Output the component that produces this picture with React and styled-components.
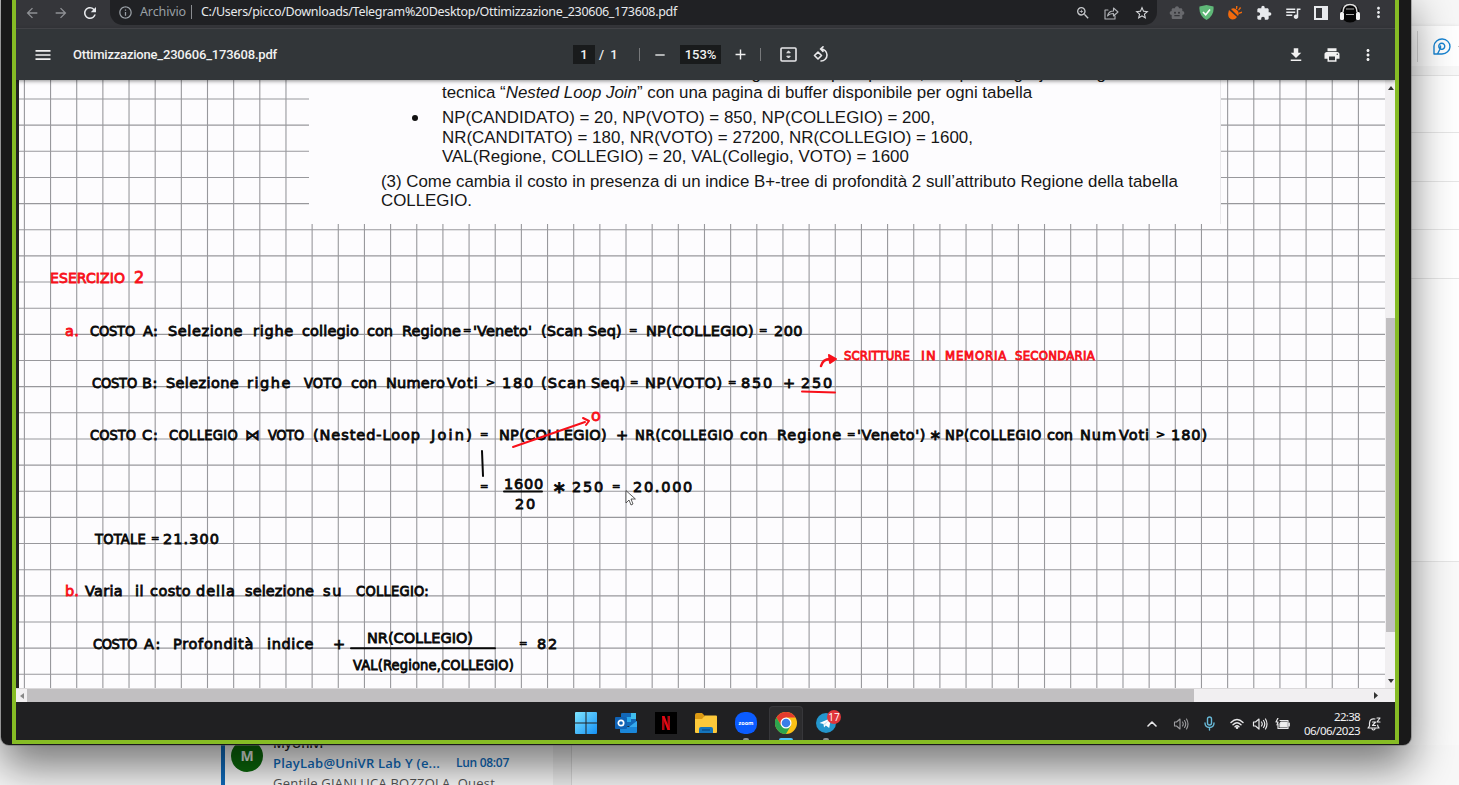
import React, { useLayoutEffect, useRef, useState } from "react";
import styled, { createGlobalStyle } from "styled-components";
import {
  MdArrowBack, MdArrowForward, MdRefresh, MdInfoOutline, MdZoomIn, MdStarOutline, MdExtension,
  MdQueueMusic, MdMoreVert, MdMenu, MdRemove, MdAdd, MdDownload, MdPrint, MdSmartToy,
} from "react-icons/md";

const Global = createGlobalStyle`
  * { box-sizing: border-box; }
  body { margin: 0; overflow: hidden; background: #fff; }
  svg { display: block; flex: none; }
`;

const ui = `"Open Sans", "Noto Sans", sans-serif`;

/* ---------- text set to an exact width ---------- */
const FitBox = styled.span`
  display: block;
  flex: none;
  width: ${(p) => p.$w}px;
  margin-left: ${(p) => p.$gap || 0}px;
  white-space: pre;
`;

function Fit({ w, gap, children, ...rest }) {
  const ref = useRef(null);
  const [spacing, setSpacing] = useState(0.01);
  useLayoutEffect(() => {
    const el = ref.current;
    const n = el.textContent.length;
    setSpacing((s) => s + (w - el.getBoundingClientRect().width) / n);
  }, [w]);
  return (
    <FitBox {...rest} $w={w} $gap={gap}>
      <span ref={ref} style={{ letterSpacing: spacing }}>{children}</span>
    </FitBox>
  );
}

/* ---------- mail application behind the window ---------- */
const Desktop = styled.div`
  position: relative;
  width: 1459px;
  height: 785px;
  overflow: hidden;
  background: #fafafa;
`;
const MailSide = styled.div`
  margin-left: 1400px;
  height: 745px;
  display: flex;
  flex-direction: column;
`;
const MailTop = styled.div`
  height: 26px;
  background: #f7f7f7;
`;
const MailCommands = styled.div`
  height: 40px;
  background: #fff;
  box-shadow: 0 2px 5px rgba(0, 0, 0, 0.22);
  display: flex;
  align-items: center;
  padding-left: 17px;
  gap: 14px;
  flex: none;
`;
const Rule = styled.div`
  width: 1px;
  height: 31px;
  background: #d8d8d8;
`;
const MoreDash = styled.div`
  width: 2px;
  height: 1px;
  margin-left: -7px;
  background: #c4c4c4;
`;
const MailRow = styled.div`
  height: ${(p) => p.$h}px;
  flex: none;
  border-bottom: 1px solid #e6e6e6;
  background: ${(p) => p.$bg || "#fff"};
`;
const MailBottom = styled.div`
  height: 40px;
  display: flex;
  padding-left: 221px;
  background: #f8f8f8;
`;
const MailItem = styled.div`
  width: 332px;
  height: 40px;
  border-left: 4px solid #0f6cbd;
  background: #fdfdfd;
  display: flex;
  padding-left: 6px;
  gap: 10px;
  overflow: hidden;
`;
const MailGutter = styled.div`
  width: 19px;
  background: #f1f1f1;
  border-right: 1px solid #dcdcdc;
`;
const Avatar = styled.div`
  width: 32px;
  height: 32px;
  border-radius: 50%;
  margin-top: -5px;
  background: #0b6a0b;
  color: #e9efe9;
  font: 700 14px/32px ${ui};
  text-align: center;
  flex: none;
`;
const MailText = styled.div`
  margin-top: -12px;
  font: 400 13px/20px ${ui};
  color: #555;
`;
const Sender = styled.div`
  color: #222;
  height: 20px;
  font-weight: 600;
`;
const Subject = styled.div`
  display: flex;
  height: 20px;
  color: #0f6cbd;
  font-weight: 600;
`;
const Small = styled(Fit)`font-size: 12px;`;

/* ---------- shared window ---------- */
const Frame = styled.div`
  position: absolute;
  left: 1px;
  top: -12px;
  width: 1410px;
  height: 757px;
  border: solid #191919;
  border-width: 12px 12px 1px 11px;
  border-radius: 0 0 8px 8px;
  background: #191919;
  box-shadow: 0 0 0 1px rgba(100, 100, 100, 0.45), 0 22px 44px rgba(0, 0, 0, 0.52);
`;
const Share = styled.div`
  height: 744px;
  border: solid #86bc25;
  border-width: 0 4px 4px 4px;
  display: flex;
  flex-direction: column;
  overflow: hidden;
`;

/* ---------- browser bar ---------- */
const BrowserBar = styled.div`
  height: 29px;
  flex: none;
  background: #35363a;
  border-bottom: 1px solid #4a4b50;
  display: flex;
  align-items: flex-start;
  color: #e8eaed;
  font: 400 12.5px/24px "Noto Sans", sans-serif;
`;
const Slot = styled.div`
  width: ${(p) => p.$w}px;
  height: ${(p) => p.$h || 25}px;
  flex: none;
  display: flex;
  align-items: center;
  justify-content: center;
  color: ${(p) => p.$c || "inherit"};
`;
const Address = styled.div`
  width: 1047px;
  height: 25px;
  background: #202124;
  border-radius: 0 0 13px 13px;
  display: flex;
  color: #e8eaed;
  margin-right: 6px;
`;
const Scheme = styled(Fit)`color: #9aa0a6;`;
const Bar = styled.div`
  width: 1px;
  height: 14px;
  margin: 5px 9px 0 5px;
  background: #8a8c90;
`;
const Grow = styled.div`flex: 1;`;

/* ---------- PDF toolbar ---------- */
const PdfBar = styled.div`
  height: 51px;
  flex: none;
  background: #323639;
  display: flex;
  align-items: center;
  color: #f1f1f1;
  font: 500 13px/19px Roboto, sans-serif;
  position: relative;
  z-index: 2;
  box-shadow: 0 1px 4px rgba(0, 0, 0, 0.45);
`;
const Field = styled.div`
  width: ${(p) => p.$w}px;
  height: 19px;
  background: #191b1c;
  text-align: center;
`;
const Tick = styled.div`
  width: 1px;
  height: 13px;
  background: #77797b;
`;
const Total = styled.div`
  width: 44px;
  padding-left: 4px;
  word-spacing: 3px;
`;

/* ---------- document ---------- */
const Viewer = styled.div`
  height: 608px;
  flex: none;
  display: flex;
  background: #222;
  padding-left: 3px;
`;
const Paper = styled.div`
  position: relative;
  width: 1366px;
  height: 608px;
  background: #fdfcfe;
  overflow: hidden;
`;
const Overlay = styled.svg`
  position: absolute;
  left: 0;
  top: 0;
`;
const Brief = styled.div`
  position: relative;
  margin-left: 290px;
  width: 912px;
  height: 144px;
  background: #fdfcfe;
  border-right: 1px solid #e8e7ea;
  padding-left: 72px;
  color: #161616;
  font: 400 16.9px/19px "Liberation Sans", sans-serif;
  overflow: hidden;
`;
const BriefLine = styled.div`
  display: flex;
  height: 19px;
  margin-top: ${(p) => p.$mt || 0}px;
  padding-left: ${(p) => p.$in || 0}px;
`;
const Bullet = styled.div`
  width: 6px;
  height: 6px;
  border-radius: 50%;
  background: #111;
  margin: 7px 24px 0 31px;
`;
const Notes = styled.div`
  position: relative;
  height: 464px;
`;
const NoteRow = styled.div`
  height: ${(p) => p.$h}px;
  display: flex;
  align-items: flex-end;
`;
const Ink = styled(Fit)`
  font: 400 14.5px/20px "DejaVu Sans", sans-serif;
  font-family: ${(p) => (p.$narrow ? `"DejaVu Sans Condensed", ` : "")}"DejaVu Sans", sans-serif;
  font-stretch: ${(p) => (p.$narrow ? "condensed" : "normal")};
  font-size: ${(p) => p.$size || 14.5}px;
  height: 20px;
  color: ${(p) => (p.$red ? "#f8101a" : "#080808")};
  -webkit-text-stroke: 0.8px currentColor;
`;

/* words written in tight capitals */
const tight = /^(COSTO|COLLEGIO:?|VOTO|TOTALE|VAL.*|SCRITTURE|MEMORIA|SECONDARIA|NP\(COLLEGIO|NR\(COLLEGIO)$/;

/* [text, start, end, red?, size?] per word; y is the writing line */
const notes = [
  { y: 283, words: [["ESERCIZIO", 50, 125, 1, 14], ["2", 134, 145, 1, 16]] },
  { y: 336, words: [["a.", 65, 79, 1], ["COSTO", 90, 135], ["A:", 143, 158], ["Selezione", 168, 243], ["righe", 253, 294], ["collegio", 302, 359], ["con", 367, 393], ["Regione", 402, 461], ["=", 463, 471, 0, 10], ["'Veneto'", 473, 532], ["(Scan", 541, 583], ["Seq)", 588, 622], ["=", 629, 637, 0, 10], ["NP(COLLEGIO)", 646, 754], ["=", 759, 767, 0, 10], ["200", 774, 803]] },
  { y: 361, words: [["SCRITTURE", 844, 910, 1, 13], ["IN", 921, 937, 1, 13], ["MEMORIA", 945, 1007, 1, 13], ["SECONDARIA", 1015, 1095, 1, 13]] },
  { y: 388, words: [["COSTO", 92, 137], ["B:", 142, 158], ["Selezione", 166, 239], ["righe", 247, 292], ["VOTO", 304, 342], ["con", 351, 377], ["Numero", 386, 445], ["Voti", 447, 479], [">", 486, 494, 0, 11], ["180", 502, 535], ["(Scan", 541, 587], ["Seq)", 591, 626], ["=", 630, 638, 0, 10], ["NP(VOTO)", 645, 723], ["=", 728, 736, 0, 10], ["850", 741, 774], ["+", 783, 796], ["250", 801, 834]] },
  { y: 421, words: [["o", 591, 603, 1, 16]] },
  { y: 440, words: [["COSTO", 90, 136], ["C:", 142, 159], ["COLLEGIO", 169, 238], ["⋈", 245, 261], ["VOTO", 268, 304], ["(Nested-Loop", 313, 421], ["Join)", 431, 474], ["=", 480, 488, 0, 10], ["NP(COLLEGIO)", 499, 607], ["+", 616, 628], ["NR(COLLEGIO", 635, 734], ["con", 740, 768], ["Regione", 777, 842], ["=", 847, 855, 0, 10], ["'Veneto')", 857, 926], ["∗", 929, 941], ["NP(COLLEGIO", 945, 1042], ["con", 1047, 1073], ["Num", 1080, 1117], ["Voti", 1119, 1150], [">", 1156, 1165, 0, 11], ["180)", 1171, 1208]] },
  { y: 489, words: [["1600", 504, 544]] },
  { y: 492, words: [["=", 480, 488, 0, 10], ["∗", 552, 566, 0, 17], ["250", 572, 605], ["=", 612, 621, 0, 10], ["20.000", 633, 694]] },
  { y: 509, words: [["20", 515, 537]] },
  { y: 544, words: [["TOTALE", 95, 146], ["=", 151, 159, 0, 10], ["21.300", 163, 220]] },
  { y: 596, words: [["b.", 65, 79, 1], ["Varia", 85, 123], ["il", 135, 144], ["costo", 150, 191], ["della", 196, 236], ["selezione", 245, 314], ["su", 323, 343], ["COLLEGIO:", 356, 429]] },
  { y: 643, words: [["NR(COLLEGIO)", 367, 473]] },
  { y: 649, words: [["COSTO", 93, 137], ["A:", 144, 162], ["Profondità", 173, 254], ["indice", 267, 314], ["+", 333, 345], ["=", 519, 527, 0, 10], ["82", 537, 559]] },
  { y: 670, words: [["VAL(Regione,COLLEGIO)", 353, 514]] },
];

function Handwriting() {
  let prevY = 219;
  return (
    <Notes>
      {notes.map((row) => {
        const h = row.y - prevY;
        prevY = row.y;
        let x = 19;
        return (
          <NoteRow key={row.y} $h={h}>
            {row.words.map(([text, from, to, red, size]) => {
              const gap = from - x;
              x = to;
              return <Ink key={from} w={to - from} gap={gap} $red={red} $size={size} $narrow={tight.test(text)}>{text}</Ink>;
            })}
          </NoteRow>
        );
      })}
    </Notes>
  );
}

function SquaredPaper() {
  const cols = Array.from({ length: 52 }, (_, i) => 5.4 + i * 26.157);
  const rows = Array.from({ length: 23 }, (_, i) => 19 + i * 26.15);
  return (
    <Overlay width="1366" height="608" stroke="#98989c" strokeWidth="1.1">
      {cols.map((x) => <line key={x} x1={x} x2={x} y1="0" y2="608" />)}
      {rows.map((y) => <line key={y} y1={y} y2={y} x1="0" x2="1366" />)}
    </Overlay>
  );
}

function Strokes() {
  return (
    <Overlay width="1366" height="608" viewBox="19 80 1366 608" fill="none" strokeLinecap="round" strokeLinejoin="round">
      <g stroke="#f8101a" strokeWidth="2">
        <path d="M802 391.5L835 392.5" />
        <path d="M821 366Q823 358 832 359" strokeWidth="2.5" />
        <path d="M829 355L836 359L830 363Z" fill="#f8101a" />
        <path d="M513 447L585 422M583 418L589 421L586 425" />
      </g>
      <g stroke="#080808" strokeWidth="2">
        <path d="M482 451L483 476" />
        <path d="M504 491.5H542" />
        <path d="M351 648.3H495" />
      </g>
      <path d="M626 491v12l3-3 2 5 2-1-2-5h4z" fill="#fff" stroke="#333" strokeWidth=".8" />
    </Overlay>
  );
}

const VScroll = styled.div`
  width: 10px;
  height: 608px;
  background: #f1eff1;
  display: flex;
  flex-direction: column;
  align-items: flex-end;
  padding: 6px 1px 5px 0;
`;
const VThumb = styled.div`
  width: 9px;
  height: 314px;
  background: #c1bfc1;
  margin: 228px -1px auto 0;
`;
const HScroll = styled.div`
  height: 14px;
  flex: none;
  background: #f1eff1;
  border-top: 1px solid #dad8da;
  display: flex;
  align-items: center;
`;
const HThumb = styled.div`
  width: 1167px;
  height: 13px;
  background: #c1bfc1;
`;

/* ---------- taskbar ---------- */
const Taskbar = styled.div`
  height: 38px;
  flex: none;
  background: #202022;
  display: flex;
  padding-left: 550px;
  color: #f1f1f1;
  font: 400 11.5px/14px "Noto Sans", sans-serif;
`;
const TaskItem = styled.div`
  width: 40px;
  height: 38px;
  flex: none;
  display: flex;
  flex-direction: column;
  align-items: center;
  justify-content: space-between;
  padding-top: 10px;
  position: relative;
`;
const ActiveItem = styled(TaskItem)`
  background: #2c2c2e;
  border: 1px solid #37373a;
  border-bottom: 0;
  border-radius: 4px 4px 0 0;
  width: 34px;
  height: 34px;
  margin: 4px 3px 0;
  padding-top: 5px;
`;
const Running = styled.div`
  width: ${(p) => (p.$on ? 14 : 6)}px;
  height: 2px;
  border-radius: 2px 2px 0 0;
  background: ${(p) => (p.$on ? "#4cc2ff" : "#8d8d8f")};
`;
const Badge = styled.div`
  position: absolute;
  left: 21px;
  top: 8px;
  width: 14px;
  height: 14px;
  border-radius: 50%;
  background: #e0363b;
  color: #fff;
  font: 400 10px/14px ${ui};
  text-align: center;
`;
const Tray = styled.div`
  display: flex;
  align-items: center;
  margin-left: auto;
  padding: 1px 7px 0 0;
  height: 42px;
`;
const Clock = styled.div`
  display: flex;
  flex-direction: column;
  align-items: flex-end;
  margin-left: 10px;
`;

const Lines = ({ w = 16, h = 16, c = "#e8e8ea", s = 1.3, children, vb }) => (
  <svg width={w} height={h} viewBox={vb || `0 0 ${w} ${h}`} fill="none" stroke={c} strokeWidth={s} strokeLinecap="round" strokeLinejoin="round">{children}</svg>
);

const Speaker = ({ c, s }) => (
  <Lines c={c} s={s}>
    <path d="M1.5 6v4h2L7 13V3L3.500 6zM9.500 6q1.500 2 0 4M11.500 4.500q2.500 3.500 0 7M13.500 3q3 5 0 10" />
  </Lines>
);

function BrowserTop() {
  return (
    <BrowserBar>
      <Slot $w={32} $c="#8f9195"><MdArrowBack size={16} /></Slot>
      <Slot $w={26} $c="#8f9195"><MdArrowForward size={16} /></Slot>
      <Slot $w={32}><MdRefresh size={18} /></Slot>
      <Slot $w={4} />
      <Address>
        <Slot $w={30} $c="#9aa0a6"><MdInfoOutline size={15} /></Slot>
        <Scheme w={46}>Archivio</Scheme>
        <Bar />
        <Fit w={476}>C:/Users/picco/Downloads/Telegram%20Desktop/Ottimizzazione_230606_173608.pdf</Fit>
        <Grow />
        <Slot $w={29} $c="#c6c8cb"><MdZoomIn size={16} /></Slot>
        <Slot $w={29} $c="#a9abaf">
          <Lines w={15} h={14} s={1.1} c="#b4b6ba"><path d="M4 4H1v9h10v-3M3.500 10q1-5 6-5V2l4.500 4-4.500 4V7.500q-4 0-6 2.500z" /></Lines>
        </Slot>
        <Slot $w={31} $c="#d5d7da"><MdStarOutline size={16} /></Slot>
      </Address>
      <Slot $w={28.8} $c="#68696d"><MdSmartToy size={16} /></Slot>
      <Slot $w={28.8}>
        <svg width="15" height="15" viewBox="0 0 15 15"><path d="M.5 1.500L7.500 0l7 1.500q1 9-7 13.500Q-.5 10.500.5 1.500z" fill="#5fb878" /><path d="M4 7l2.700 2.700L11 4.500" fill="none" stroke="#fff" strokeWidth="1.600" /></svg>
      </Slot>
      <Slot $w={28.8}>
        <svg width="14" height="15" viewBox="0 0 14 15"><path d="M1 5l8 7q-2 3-5 2.500Q-1 13 .500 7zM3 4q3-2 6 1t1 6zM8 4V1h1.500l-.3 3zM10 5l2-3 1.200 1-2.200 2.500zM11 7.500l3-1V8l-3 1z" fill="#f26a0c" /></svg>
      </Slot>
      <Slot $w={28.8}><MdExtension size={16} /></Slot>
      <Slot $w={28.8}><MdQueueMusic size={18} /></Slot>
      <Slot $w={28.8}>
        <svg width="14" height="14"><rect x="1" y="1" width="12" height="12" fill="none" stroke="#e8eaed" strokeWidth="2" /><path d="M8 1h5v12H8z" fill="#e8eaed" /></svg>
      </Slot>
      <Slot $w={28.8}>
        <svg width="20" height="20" viewBox="0 0 20 20"><circle cx="10" cy="10" r="9.500" fill="#060606" /><path d="M3 9Q3 1.500 10 1.500T17 9" fill="none" stroke="#ddd" strokeWidth="1.500" /><rect y="9" width="4" height="8" rx="1.500" fill="#f4f4f4" /><rect x="16" y="9" width="4" height="8" rx="1.500" fill="#f4f4f4" /><path d="M6 6h8M6 11.500h8" stroke="#aaa" /></svg>
      </Slot>
      <Slot $w={28.8}><MdMoreVert size={17} /></Slot>
    </BrowserBar>
  );
}

function PdfToolbar() {
  return (
    <PdfBar>
      <Slot $w={53}><MdMenu size={20} /></Slot>
      <Slot $w={4} />
      <Fit w={204}>Ottimizzazione_230606_173608.pdf</Fit>
      <Slot $w={296} />
      <Field $w={22}>1</Field>
      <Total>/ 1</Total>
      <Tick />
      <Slot $w={40}><MdRemove size={16} /></Slot>
      <Field $w={41}>153%</Field>
      <Slot $w={39}><MdAdd size={17} /></Slot>
      <Tick />
      <Slot $w={54}>
        <Lines w={17} h={15} s={1.6}><rect x="1" y="1" width="15" height="13" rx="1" /><path d="M7 5.500L8.500 4 10 5.500zM7 9.500L8.500 11 10 9.500z" strokeWidth="1" fill="#eee" /></Lines>
      </Slot>
      <Slot $w={12}>
        <Lines w={17} h={17} s={1.6}><path d="M1.500 9.500L5 6l3.500 3.500L5 13zM8 3a6 6 0 1 1 0 12M10 .8L7.500 3 10 5.300" /></Lines>
      </Slot>
      <Grow />
      <Slot $w={36}><MdDownload size={18} /></Slot>
      <Slot $w={36}><MdPrint size={18} /></Slot>
      <Slot $w={36}><MdMoreVert size={18} /></Slot>
      <Slot $w={9} />
    </PdfBar>
  );
}

function Document() {
  return (
    <Viewer>
      <Paper>
        <SquaredPaper />
        <Brief>
          <BriefLine $mt={-16} $in={61}><Fit w={690}>Calcolare il costo di esecuzione dell'interrogazione sopra riportata, con piano ogni join eseguito</Fit></BriefLine>
          <BriefLine $in={61}><Fit w={590}>tecnica “<i>Nested Loop Join</i>” con una pagina di buffer disponibile per ogni tabella</Fit></BriefLine>
          <BriefLine $mt={6}><Bullet /><Fit w={493}>NP(CANDIDATO) = 20, NP(VOTO) = 850, NP(COLLEGIO) = 200,</Fit></BriefLine>
          <BriefLine $mt={1} $in={61}><Fit w={531}>NR(CANDITATO) = 180, NR(VOTO) = 27200, NR(COLLEGIO) = 1600,</Fit></BriefLine>
          <BriefLine $in={61}><Fit w={467}>VAL(Regione, COLLEGIO) = 20, VAL(Collegio, VOTO) = 1600</Fit></BriefLine>
          <BriefLine $mt={6}><Fit w={797}>(3) Come cambia il costo in presenza di un indice B+-tree di profondità 2 sull’attributo Regione della tabella</Fit></BriefLine>
          <BriefLine><Fit w={91}>COLLEGIO.</Fit></BriefLine>
        </Brief>
        <Handwriting />
        <Strokes />
      </Paper>
      <VScroll>
        <svg width="6" height="4"><path d="M0 4l3-4 3 4z" fill="#333" /></svg>
        <VThumb />
        <svg width="6" height="4"><path d="M0 0l3 4 3-4z" fill="#333" /></svg>
      </VScroll>
    </Viewer>
  );
}

function WindowsTaskbar() {
  return (
    <Taskbar>
      <TaskItem>
        <svg width="22" height="22"><defs><linearGradient id="win" x2="1" y2="1"><stop stopColor="#7ee5ff" /><stop offset="1" stopColor="#1590f5" /></linearGradient></defs><path d="M0 1Q0 0 1 0h9.500v10.500H0zM11.500 0H21q1 0 1 1v9.500H11.500zM0 11.500h10.500V22H1q-1 0-1-1zM11.500 11.500H22V21q0 1-1 1h-9.500z" fill="url(#win)" /></svg>
      </TaskItem>
      <TaskItem>
        <svg width="22" height="22" viewBox="0 0 22 22"><path d="M6 2q0-1 1-1h14v13H6z" fill="#1268b8" /><path d="M11 5h5v5h-5z" fill="#28a8ea" /><path d="M16 1h5v6h-5z" fill="#50d9ff" opacity=".75" /><path d="M5 13l9 2 8-6v11q0 1-1 1H6q-1 0-1-1z" fill="#1a86d9" /><path d="M14 15l8-6v6z" fill="#35a9ee" /><rect y="5" width="12" height="12" rx="1" fill="#0f62b5" /><circle cx="6" cy="11" r="2.700" fill="none" stroke="#fff" strokeWidth="1.700" /></svg>
      </TaskItem>
      <TaskItem>
        <svg width="22" height="22"><path d="M0 0h22v22H0z" fill="#000" /><path d="M7 4h2.500v14H7z" fill="#b1060f" /><path d="M12.500 4H15v14h-2.500z" fill="#b1060f" /><path d="M7 4h2.500L15 18h-2.500z" fill="#e50914" /></svg>
      </TaskItem>
      <TaskItem>
        <svg width="22" height="22"><path d="M0 3q0-2 2-2h5l2.500 2.500V8H0z" fill="#dc9a13" /><path d="M0 7h7l3-3.500h11q1 0 1 1V20q0 1-1 1H1q-1 0-1-1z" fill="#fdc93a" /><path d="M4 21v-4q0-2 2-2h10q2 0 2 2v4z" fill="#1575bd" /><path d="M7 18h8" stroke="#0b4d87" strokeWidth="1.300" /></svg>
      </TaskItem>
      <TaskItem>
        <svg width="22" height="22"><rect width="22" height="22" rx="9.500" fill="#0b5cff" /><text x="11" y="13" textAnchor="middle" fill="#fff" fontFamily="Open Sans, sans-serif" fontWeight="700" fontSize="6" textLength="15" lengthAdjust="spacingAndGlyphs">zoom</text></svg>
        <Running />
      </TaskItem>
      <ActiveItem>
        <svg width="22" height="22" viewBox="0 0 22 22"><circle cx="11" cy="11" r="11" fill="#fbc116" /><path d="M1.470 5.500A11 11 0 0 1 20.530 5.500H11L6.240 13.750z" fill="#e33b2e" /><path d="M1.470 5.500A11 11 0 0 0 11 22l4.760-8.250H6.240z" fill="#2da44e" /><circle cx="11" cy="11" r="5.500" fill="#fff" /><circle cx="11" cy="11" r="4.300" fill="#3b7de9" /></svg>
        <Running $on />
      </ActiveItem>
      <TaskItem>
        <svg width="20" height="22"><circle cx="10" cy="11" r="10" fill="#2496cd" /><path d="M3.500 11L15 6l-1.800 10-3.400-2.400L8 15.500l-.5-3.500z" fill="#fff" /><path d="M7.500 12L13 8l-4 5z" fill="#c9e3f2" /></svg>
        <Badge>17</Badge>
        <Running />
      </TaskItem>
      <Tray>
        <Slot $w={29}><Lines w={10} h={6} s={1.6}><path d="M1 5l4-4 4 4" /></Lines></Slot>
        <Slot $w={29}><Speaker c="#9d9da0" s={1.1} /></Slot>
        <Slot $w={29}><Lines w={11} h={15} c="#68b9d8" s={1.4}><rect x="3.500" y="1" width="4" height="8" rx="2" /><path d="M1 7q0 4.500 4.500 4.500T10 7M5.500 11.500V14" /></Lines></Slot>
        <Slot $w={26}><Lines w={14} h={11} s={1.4}><path d="M1 4.500q6-6 12 0M3 6.800q4-4 8 0M5 8.800q2-2 4 0" /><circle cx="7" cy="9.700" r=".6" /></Lines></Slot>
        <Slot $w={20}><Speaker s={1.2} /></Slot>
        <Slot $w={24}><Lines w={15} h={12} s={1.2}><path d="M5 2.500h8v8H3V6M14.300 5v3" /><path d="M6 4h6v5H5V5.500z" fill="#eee" /><path d="M3 0L1 4h2L2 7" /></Lines></Slot>
        <Clock><Fit w={26}>22:38</Fit><Fit w={56}>06/06/2023</Fit></Clock>
        <Slot $w={28}><Lines w={14} h={14} s={1.2}><path d="M8 2Q3 1 2.500 6v3L1 11h11l-1.300-2V8M5 12q1.500 2 3 0M5.500 5h3l-3 3.500h3M10 1h3l-3 4h3" /></Lines></Slot>
      </Tray>
    </Taskbar>
  );
}

export default function App() {
  return (
    <Desktop>
      <Global />
      <MailSide>
        <MailTop />
        <MailCommands>
          <Rule />
          <Lines w={19} h={17} c="#1784d2" s={1.4}><path d="M2 16V8a8 7.500 0 1 1 8 8zM5.500 16l3-6M8.500 11a3 3 0 1 1 2.500 0q-2 .8-2.500 0V8" /></Lines>
          <MoreDash />
        </MailCommands>
        <MailRow $h={10} $bg="#f8f8f8" />
        <MailRow $h={57} /><MailRow $h={49} /><MailRow $h={48} /><MailRow $h={49} />
        <MailRow $h={283} />
      </MailSide>
      <MailBottom>
        <MailItem>
          <Avatar>M</Avatar>
          <MailText>
            <Sender><Fit w={52}>MyUnivr</Fit></Sender>
            <Subject><Fit w={167}>PlayLab@UniVR Lab Y (e...</Fit><Small w={53} gap={16}>Lun 08:07</Small></Subject>
            <Fit w={222}>Gentile GIANLUCA BOZZOLA, Quest</Fit>
          </MailText>
        </MailItem>
        <MailGutter />
      </MailBottom>
      <Frame>
        <Share>
          <BrowserTop />
          <PdfToolbar />
          <Document />
          <HScroll>
            <Slot $w={11} $h={13}><svg width="4" height="6"><path d="M4 0L0 3l4 3z" fill="#888" /></svg></Slot>
            <HThumb />
            <Grow />
            <svg width="4" height="7"><path d="M0 0l4 3.500L0 7z" fill="#333" /></svg>
            <Slot $w={17} $h={13} />
          </HScroll>
          <WindowsTaskbar />
        </Share>
      </Frame>
    </Desktop>
  );
}
